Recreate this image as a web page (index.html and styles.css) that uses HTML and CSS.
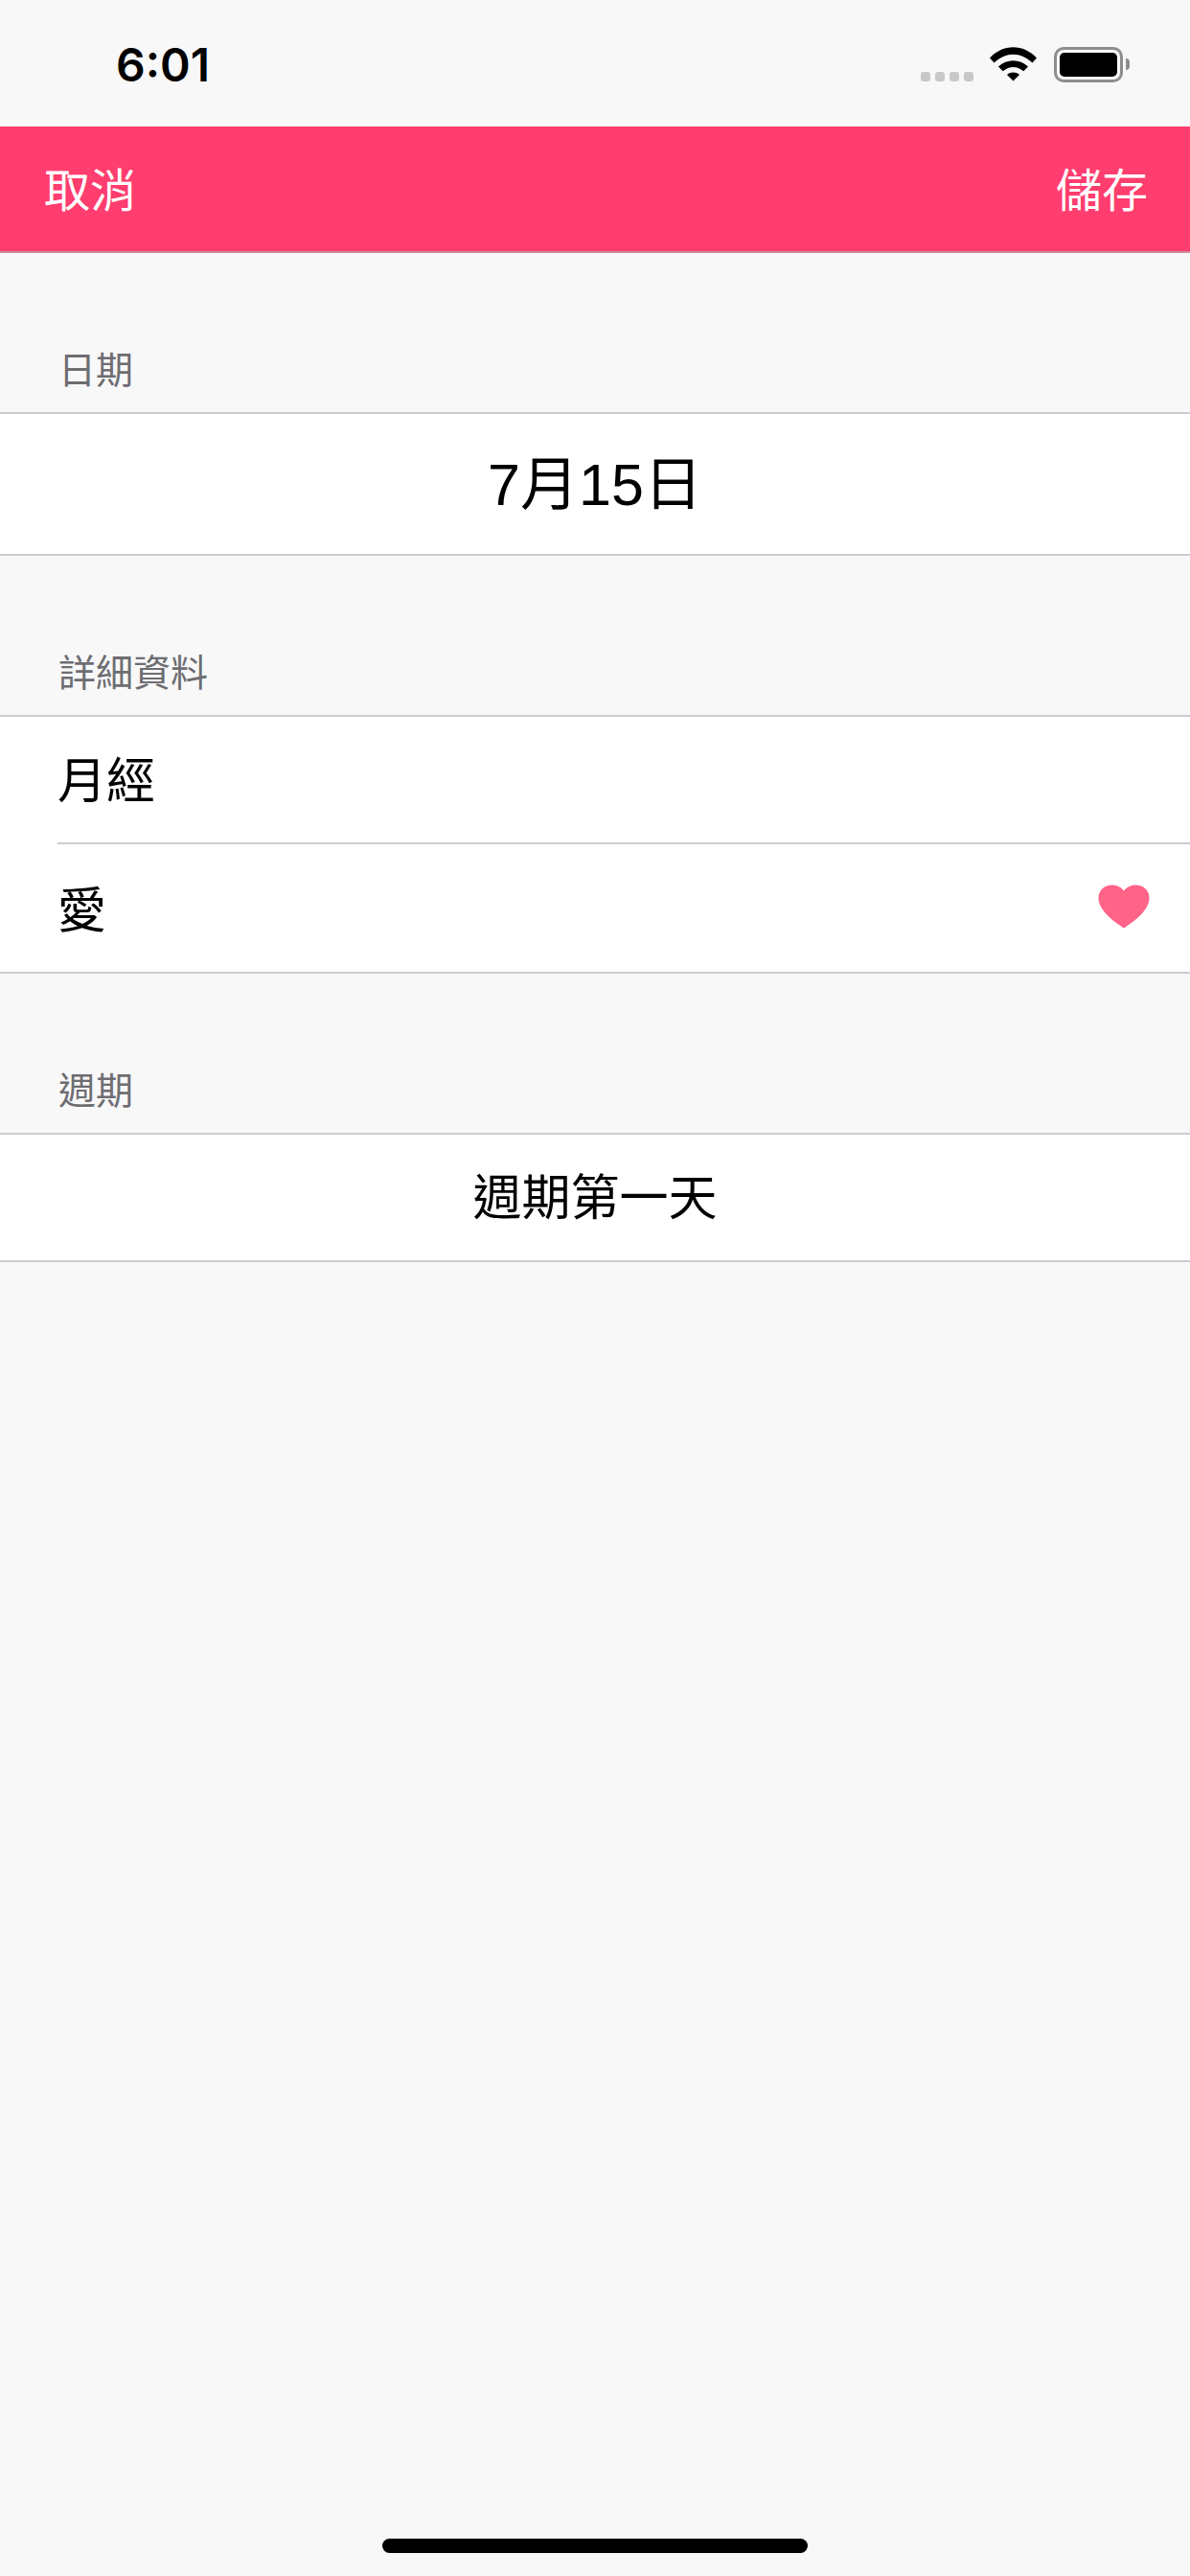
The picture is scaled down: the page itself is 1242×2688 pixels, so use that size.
FILE: index.html
```html
<!DOCTYPE html>
<html lang="zh-Hant">
<head>
  <meta charset="UTF-8" />
  <title>編輯日期</title>
  <link rel="stylesheet" href="styles.css">
</head>
<body>

  <div class="status-bar">
    <span class="clock">6:01</span>
    <div class="status-icons">
      <div class="signal"><i></i><i></i><i></i><i></i></div>
      <svg class="wifi" width="50" height="36" viewBox="0 0 50 36">
        <path d="M0 11.500 C14 -3.500 35 -3.500 49 11.500 L44.500 16.500 C32 4.800 17 4.800 4.500 16.500 Z" />
        <path d="M9 20.500 C18 12 31 12 40 20.500 L35.300 25.300 C28 19.500 21 19.500 13.700 25.300 Z" />
        <path d="M18 29 C22 25.800 27 25.800 31 29 L24.500 35.500 Z" />
      </svg>
      <div class="battery"><div class="battery-fill"></div></div>
      <div class="battery-cap"></div>
    </div>
  </div>

  <div class="nav-bar">
    <a class="nav-link">取消</a>
    <a class="nav-link">儲存</a>
  </div>

  <main class="content">
    <section class="group">
      <h2 class="group-title">日期</h2>
      <div class="rows">
        <div class="row row-date">7月15日</div>
      </div>
    </section>

    <section class="group">
      <h2 class="group-title">詳細資料</h2>
      <div class="rows">
        <div class="row row-left row-first">月經</div>
        <div class="row-divider"></div>
        <div class="row row-left row-second">
          <span>愛</span>
          <svg class="heart" width="54" height="46" viewBox="0 0 54 48" preserveAspectRatio="none">
            <path d="M27 47.500 C24 44.800 0.500 31 0.500 14.500 C0.500 6 7 0.500 14.500 0.500 C20 0.500 24.500 3 27 7 C29.500 3 34 0.500 39.500 0.500 C47 0.500 53.500 6 53.500 14.500 C53.500 31 30 44.800 27 47.500 Z" />
          </svg>
        </div>
      </div>
    </section>

    <section class="group">
      <h2 class="group-title">週期</h2>
      <div class="rows">
        <div class="row row-cycle">週期第一天</div>
      </div>
    </section>
  </main>

  <div class="home-area">
    <div class="home-bar"></div>
  </div>

</body>
</html>
```

FILE: styles.css
```css
:root {
  --bg-color: #f8f8f8;
  --pink: #ff3d6e;
  --line: #cdccd0;
  --label: #6d6d72;
}

body {
  margin: 0;
  height: 2688px;
  display: flex;
  flex-direction: column;
  background-color: var(--bg-color);
  color: #000;
  font-family: "Liberation Sans", "Noto Sans CJK TC", sans-serif;
}

/* status bar */
.status-bar {
  height: 132px;
  flex: none;
  display: flex;
  justify-content: space-between;
  align-items: flex-start;
  box-sizing: border-box;
  padding: 0 63px 0 121px;
}

.clock {
  margin-top: 38px;
  font-family: Inter, sans-serif;
  font-size: 48px;
  font-weight: 600;
  line-height: 60px;
}

.status-icons {
  display: flex;
  align-items: flex-start;
  padding-top: 49px;
}

.signal {
  display: flex;
  gap: 5px;
  margin-top: 26px;
  margin-right: 17px;
}

.signal i {
  width: 10px;
  height: 10px;
  border-radius: 3px;
  background: #c8c8c8;
}

.wifi {
  fill: #000;
  margin-right: 17px;
}

.battery {
  width: 72px;
  height: 37px;
  box-sizing: border-box;
  border: 3px solid #8e8e8e;
  border-radius: 10px;
  padding: 3px;
}

.battery-fill {
  height: 100%;
  background: #000;
  border-radius: 5px;
}

.battery-cap {
  width: 4px;
  height: 12px;
  margin: 12px 0 0 3px;
  background: #8e8e8e;
  border-radius: 0 4px 4px 0;
}

/* pink bar */
.nav-bar {
  height: 132px;
  flex: none;
  box-sizing: border-box;
  border-bottom: 2px solid #c98a9c;
  background-color: var(--pink);
  display: flex;
  justify-content: space-between;
  align-items: center;
  padding: 6px 44px 0 46px;
}

.nav-link {
  color: #fff;
  font-size: 48px;
  line-height: 60px;
}

/* grouped list */
.content {
  flex: 1;
}

.group-title {
  height: 166px;
  margin: 0;
  box-sizing: border-box;
  padding: 97px 0 0 61px;
  color: var(--label);
  font-size: 39px;
  font-weight: 400;
  line-height: 52px;
}

.rows {
  background: #fff;
  border-top: 2px solid var(--line);
  border-bottom: 2px solid var(--line);
}

.row {
  display: flex;
  align-items: center;
}

.row-date {
  height: 146px;
  box-sizing: border-box;
  padding-bottom: 10px;
  justify-content: center;
  font-size: 61px;
}

.row-left {
  box-sizing: border-box;
  padding: 0 42px 6px 60px;
  font-size: 51px;
  justify-content: space-between;
}

.row-first {
  height: 131px;
}

.row-second {
  height: 133px;
  padding-bottom: 4px;
}

.row-divider {
  height: 2px;
  margin-left: 60px;
  background: var(--line);
}

.row-cycle {
  height: 131px;
  box-sizing: border-box;
  padding-bottom: 8px;
  justify-content: center;
  font-size: 51px;
}

.heart {
  fill: #ff6388;
}

/* home indicator */
.home-area {
  flex: none;
  height: 39px;
  padding-bottom: 24px;
  display: flex;
  justify-content: center;
  align-items: flex-end;
}

.home-bar {
  width: 444px;
  height: 15px;
  border-radius: 8px;
  background: #000;
}
```
